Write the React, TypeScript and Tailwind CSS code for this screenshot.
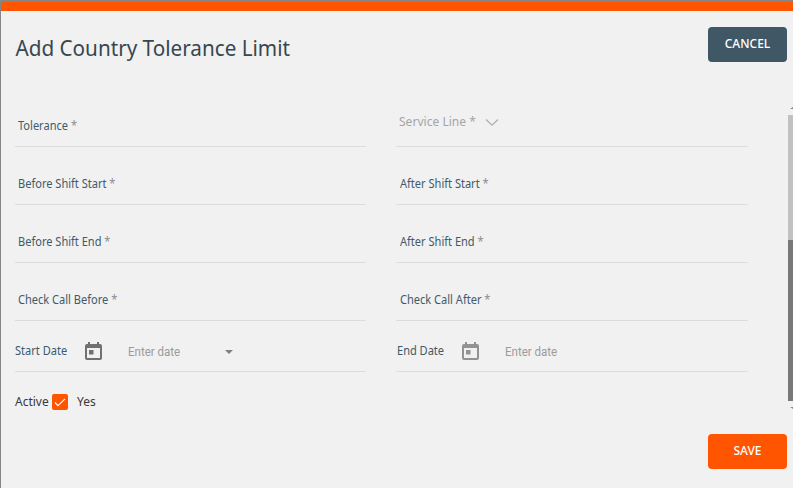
import React from "react";

type FieldProps = { label: string; className?: string };

function Field({ label, className = "" }: FieldProps) {
  return (
    <label className={`flex h-[58px] items-end border-b border-[#dadcdd] pb-[11px] text-[12px] leading-[18px] text-[#405a6b] ${className}`}>
      <span className="origin-left scale-x-[0.92] whitespace-pre">{label} <span className="text-[#8a8f92]">*</span></span>
    </label>
  );
}

function CalendarIcon({ className = "" }: { className?: string }) {
  return (
    <svg viewBox="0 0 17 18" className={`h-[18px] w-[17px] shrink-0 ${className}`} fill="currentColor">
      <path fillRule="evenodd" d="M3 0h2v2h7V0h2v2h1a2 2 0 0 1 2 2v12a2 2 0 0 1-2 2H2a2 2 0 0 1-2-2V4a2 2 0 0 1 2-2h1zM2 6v10h13V6zM4 8h4.500v4.500H4z" />
    </svg>
  );
}

export default function App() {
  return (
    <div className="h-[488px] w-[793px] overflow-hidden bg-[#858585] pt-[2px] pl-px font-['Noto_Sans',sans-serif]">
      <div className="flex h-[486px] flex-col overflow-hidden rounded-tl-[3px] border-t-[9px] border-[#ff5500] bg-[#f1f1f1]">
        <header className="flex h-[78px] shrink-0 items-start justify-between pt-4 pr-[6px] pl-[14px]">
          <h1 className="origin-left scale-x-[0.985] pt-[6px] pl-[0.5px] text-[21px] leading-[30px] text-[#37474f]">Add Country Tolerance Limit</h1>
          <button className="h-[35px] w-[79px] rounded-[4px] bg-[#405766] pb-[2px] text-[12px] font-medium text-white">CANCEL</button>
        </header>

        <main className="flex h-[331px] shrink-0 justify-between pl-[14px]">
          <form className="w-[733px]">
            <div className="grid grid-cols-[351px_352px] gap-x-[30px]">
              <Field label="Tolerance" className="pl-[3px]" />
              <div className="flex h-[58px] items-start border-b border-[#dadcdd] pt-[24px] pl-[3px] text-[12px] leading-[18px] text-[#a3a6a8]">
                <span className="w-[77px] whitespace-nowrap tracking-[0.03px]">Service Line *</span>
                <svg className="mt-[6px] ml-[9px] h-[7px] w-[14px]" viewBox="0 0 14 7" fill="none" stroke="#a9b0b5" strokeWidth="1.2">
                  <path d="M1 .5l6 5.700 6-5.700" />
                </svg>
              </div>
              <Field label="Before Shift Start" className="pl-[3px]" />
              <Field label="After Shift Start" className="pl-[4px]" />
              <Field label="Before Shift End" className="pl-[3px]" />
              <Field label="After Shift End" className="pl-[4px]" />
              <Field label="Check Call Before" className="pl-[3px]" />
              <Field label="Check Call After" className="pl-[4px]" />
              <div className="flex h-[51px] items-start border-b border-[#dadcdd] pt-[21px] text-[12px] leading-[18px] text-[#405a6b]">
                <span className="w-[70px]"><span className="inline-block origin-left scale-x-[0.92]">Start Date</span></span>
                <CalendarIcon className="text-[#707070]" />
                <span className="ml-[26px] w-[97px] pt-px font-['Roboto',sans-serif] text-[#9b9b9b]"><span className="inline-block origin-left scale-x-[0.96]">Enter date</span></span>
                <svg className="mt-[8px] h-[4px] w-[8px]" viewBox="0 0 8 4" fill="#808080"><path d="M0 0h8L4 4z" /></svg>
              </div>
              <div className="flex h-[51px] items-start border-b border-[#dadcdd] pt-[21px] pl-px text-[12px] leading-[18px] text-[#405a6b]">
                <span className="w-[65px]"><span className="inline-block origin-left scale-x-[0.92]">End Date</span></span>
                <CalendarIcon className="text-[#929292]" />
                <span className="ml-[26px] pt-px font-['Roboto',sans-serif] text-[#9b9b9b]"><span className="inline-block origin-left scale-x-[0.96]">Enter date</span></span>
              </div>
            </div>
            <div className="flex h-[38px] items-start pt-[21px] text-[12px] leading-[18px] text-[#37393b]">
              <span className="w-[37px]">Active</span>
              <span className="mt-px flex size-4 items-center justify-center rounded-[2px] bg-[#ff5500]">
                <svg className="h-[9px] w-[12px]" viewBox="0 0 12 9" fill="none" stroke="white" strokeWidth="1.1"><path d="M1 4.500l3 3.200L11 .8" /></svg>
              </span>
              <span className="ml-[9px]">Yes</span>
            </div>
          </form>
          <div className="flex w-[5px] flex-col items-end pt-[18px]">
            <svg className="h-[2px] w-[3px]" viewBox="0 0 3 2"><path d="M0 2l3-2v2z" fill="#888" /></svg>
            <div className="mt-[6px] h-[125px] w-[5px] shrink-0 bg-[#c1c1c1]" />
            <div className="h-[161px] w-[5px] shrink-0 bg-[#787878]" />
            <svg className="mt-[6px] h-[2px] w-[3px]" viewBox="0 0 3 2"><path d="M0 0h3v2z" fill="#888" /></svg>
          </div>
        </main>

        <footer className="flex justify-end pt-[14px] pr-[6px]">
          <button className="h-[35px] w-[79px] rounded-[4px] bg-[#ff5500] pb-[2px] text-[12px] font-medium text-white">SAVE</button>
        </footer>
      </div>
    </div>
  );
}
